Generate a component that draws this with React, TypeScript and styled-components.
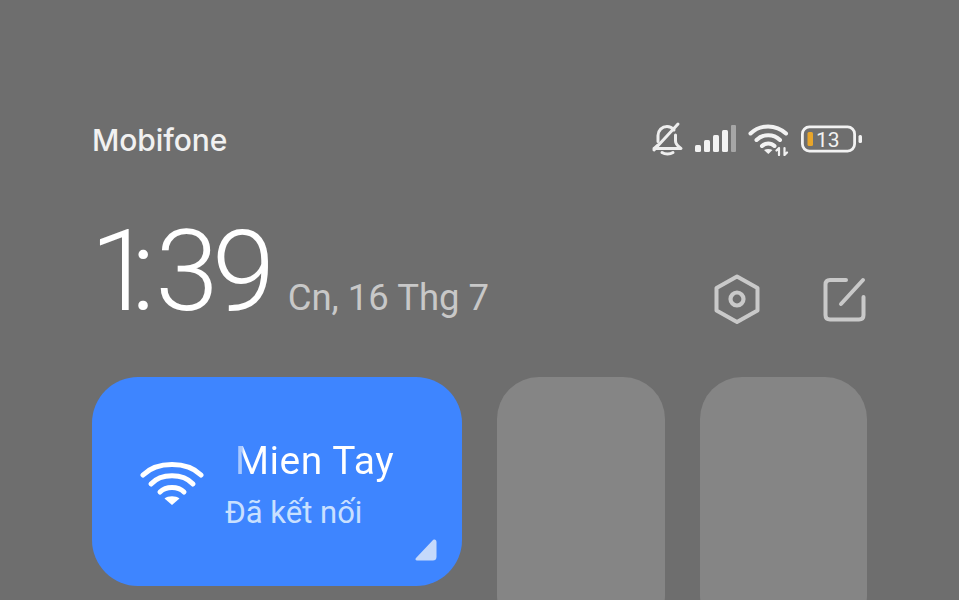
import React from 'react';
import styled, { createGlobalStyle } from 'styled-components';

const GlobalStyle = createGlobalStyle`
  html, body {
    margin: 0;
    padding: 0;
    height: 100%;
    overflow: hidden;
    background: #6e6e6e;
  }
`;

const Screen = styled.div`
  width: 959px;
  height: 600px;
  overflow: hidden;
  box-sizing: border-box;
  padding: 122px 92px 0;
  background: #6e6e6e;
  font-family: Roboto, 'Noto Sans', sans-serif;
`;

const StatusBar = styled.div`
  display: flex;
  justify-content: space-between;
  align-items: center;
  height: 36px;
`;

const Carrier = styled.div`
  font-family: Inter, Roboto, sans-serif;
  font-size: 30px;
  font-weight: 500;
  letter-spacing: -0.1px;
  color: #f1f1f1;
`;

const StatusIcons = styled.div`
  display: flex;
  align-items: center;
  gap: 11px;
  margin: -3px 4px 0 0;
`;

const ClockRow = styled.div`
  display: flex;
  align-items: baseline;
  margin-top: 66px;
  height: 95px;
`;

const Clock = styled.div`
  font-size: 114px;
  font-weight: 300;
  line-height: 95px;
  color: #ffffff;
  margin-left: -2px;
`;

// the reference clock face is narrower than Roboto, so each glyph gets its own tracking
const ClockChar = styled.span<{ $track: number }>`
  letter-spacing: ${(p) => p.$track}px;
`;

const DateText = styled.div`
  font-size: 36.5px;
  color: #c8c8c8;
  margin-left: 19px;
`;

const Actions = styled.div`
  display: flex;
  align-items: center;
  gap: 63px;
  margin-left: auto;
  align-self: flex-end;
  margin-bottom: -5px;
`;

const TileRow = styled.div`
  display: flex;
  gap: 35px;
  margin-top: 58px;
`;

const WifiTile = styled.div`
  position: relative;
  box-sizing: border-box;
  width: 370px;
  height: 209px;
  flex: none;
  border-radius: 46px;
  background: #3e85ff;
  display: flex;
  align-items: center;
  padding-left: 48px;
`;

const WifiText = styled.div`
  display: flex;
  flex-direction: column;
  margin: 6px 0 0 21px;
`;

const Ssid = styled.div`
  font-size: 39px;
  line-height: 44px;
  letter-spacing: 0.5px;
  margin-left: 10px;
  background: linear-gradient(90deg, #a9c9ff 0, #a9c9ff 7px, #ffffff 9px);
  -webkit-background-clip: text;
  background-clip: text;
  color: transparent;
`;

const WifiStatus = styled.div`
  font-size: 31px;
  line-height: 36px;
  margin-top: 12px;
  color: #c9e0ff;
`;

const Corner = styled.svg`
  position: absolute;
  right: 25px;
  bottom: 25px;
`;

const BlankTile = styled.div`
  flex: 1;
  height: 260px;
  border-radius: 42px;
  background: #858585;
`;

const App: React.FC = () => {
  return (
    <Screen>
      <GlobalStyle />
      <StatusBar>
        <Carrier>Mobifone</Carrier>
        <StatusIcons>
          <svg width="34" height="36" viewBox="0 0 34 34" fill="none" stroke="#eeeeee" strokeWidth="3" strokeLinecap="round" strokeLinejoin="round">
            <path d="M8 19.500V13.500C8 8.500 12 4.500 17 4.500C19.500 4.500 22 5.500 24 8" />
            <path d="M25.500 13V19C25.500 22 27.500 24 31 26.500H4C5.500 25.300 7 24.200 8 23" />
            <path d="M12 30.500C15 32.500 20 32.500 23 30.500" />
            <path d="M4 28L28 2" />
          </svg>
          <svg width="42" height="28" viewBox="0 0 42 28">
            <rect x="0" y="20" width="6" height="7" rx="1.500" fill="#f2f2f2" />
            <rect x="9" y="15" width="6" height="12" rx="1.500" fill="#f2f2f2" />
            <rect x="18" y="10" width="6" height="17" rx="1.500" fill="#f2f2f2" />
            <rect x="27" y="5" width="6" height="22" rx="1.500" fill="#f2f2f2" />
            <rect x="36" y="0" width="5" height="27" rx="1" fill="#a6a6a6" />
          </svg>
          <svg width="42" height="34" viewBox="0 0 42 34" fill="none" stroke="#f2f2f2" strokeWidth="4" strokeLinecap="round">
            <path d="M2.500 11.500C12 2 28 2 38 11.500" />
            <path d="M8.500 18C15 11.500 25.500 11.500 32 18" />
            <path d="M14 24C17.500 20.500 23 20.500 26.500 24" />
            <path d="M20.300 32L16 28C18.500 26.500 22 26.500 24.500 28Z" fill="#f2f2f2" stroke="none" />
            <path d="M31 33V26M31 26L28.500 28.500" strokeWidth="2.200" />
            <path d="M36.500 26V33M36.500 33L39 30.500" strokeWidth="2.200" />
          </svg>
          <svg width="62" height="28" viewBox="0 0 62 28">
            <rect x="1.400" y="1.900" width="52.200" height="24.200" rx="7" fill="none" stroke="#f2f2f2" strokeWidth="2.800" />
            <rect x="6.500" y="7" width="5.500" height="14" rx="1.500" fill="#e8a52a" />
            <text x="15" y="21.500" fontFamily="Roboto, Inter, sans-serif" fontSize="21" fill="#f2f2f2">13</text>
            <rect x="57.500" y="10" width="3.500" height="8" rx="1.500" fill="#f2f2f2" />
          </svg>
        </StatusIcons>
      </StatusBar>

      <ClockRow>
        <Clock>
          <ClockChar $track={-22}>1</ClockChar>
          <ClockChar $track={0}>:</ClockChar>
          <ClockChar $track={-6.500}>39</ClockChar>
        </Clock>
        <DateText>Cn, 16 Thg 7</DateText>
        <Actions>
          <svg width="46" height="50" viewBox="0 0 46 50" fill="none" stroke="#c9c9c9" strokeWidth="4" strokeLinejoin="round">
            <path d="M23 2.500L43.500 14V36.500L23 48L2.500 36.500V14Z" />
            <circle cx="23" cy="25" r="6.500" strokeWidth="4.200" />
          </svg>
          <svg width="44" height="46" viewBox="0 0 44 46" fill="none" stroke="#c9c9c9" strokeWidth="4" strokeLinecap="round" strokeLinejoin="round">
            <path d="M23 4H7C4 4 2.500 5.500 2.500 8.500V39C2.500 42 4 43.500 7 43.500H36C39 43.500 40.500 42 40.500 39V21" />
            <path d="M18 28L40 4" />
          </svg>
        </Actions>
      </ClockRow>

      <TileRow>
        <WifiTile>
          <svg width="64" height="48" viewBox="0 0 64 48" fill="none" stroke="#ffffff" strokeWidth="5" strokeLinecap="round">
            <path d="M3 17C17 3 47 3 61 17" />
            <path d="M11 26C21 15 43 15 53 26" />
            <path d="M20 34C26 28 38 28 44 34" />
            <path d="M32 47L24.500 40.500C28 37.500 36 37.500 39.500 40.500Z" fill="#ffffff" stroke="none" />
          </svg>
          <WifiText>
            <Ssid>Mien Tay</Ssid>
            <WifiStatus>Đã kết nối</WifiStatus>
          </WifiText>
          <Corner width="22" height="22" viewBox="0 0 22 22">
            <path d="M18 1C20 0 21.500 1 21.500 3V18C21.500 20.500 20 21.500 18 21.500H2C0.500 21.500 0 20 1 19Z" fill="#c5d9fb" />
          </Corner>
        </WifiTile>
        <BlankTile />
        <BlankTile />
      </TileRow>
    </Screen>
  );
};

export default App;
